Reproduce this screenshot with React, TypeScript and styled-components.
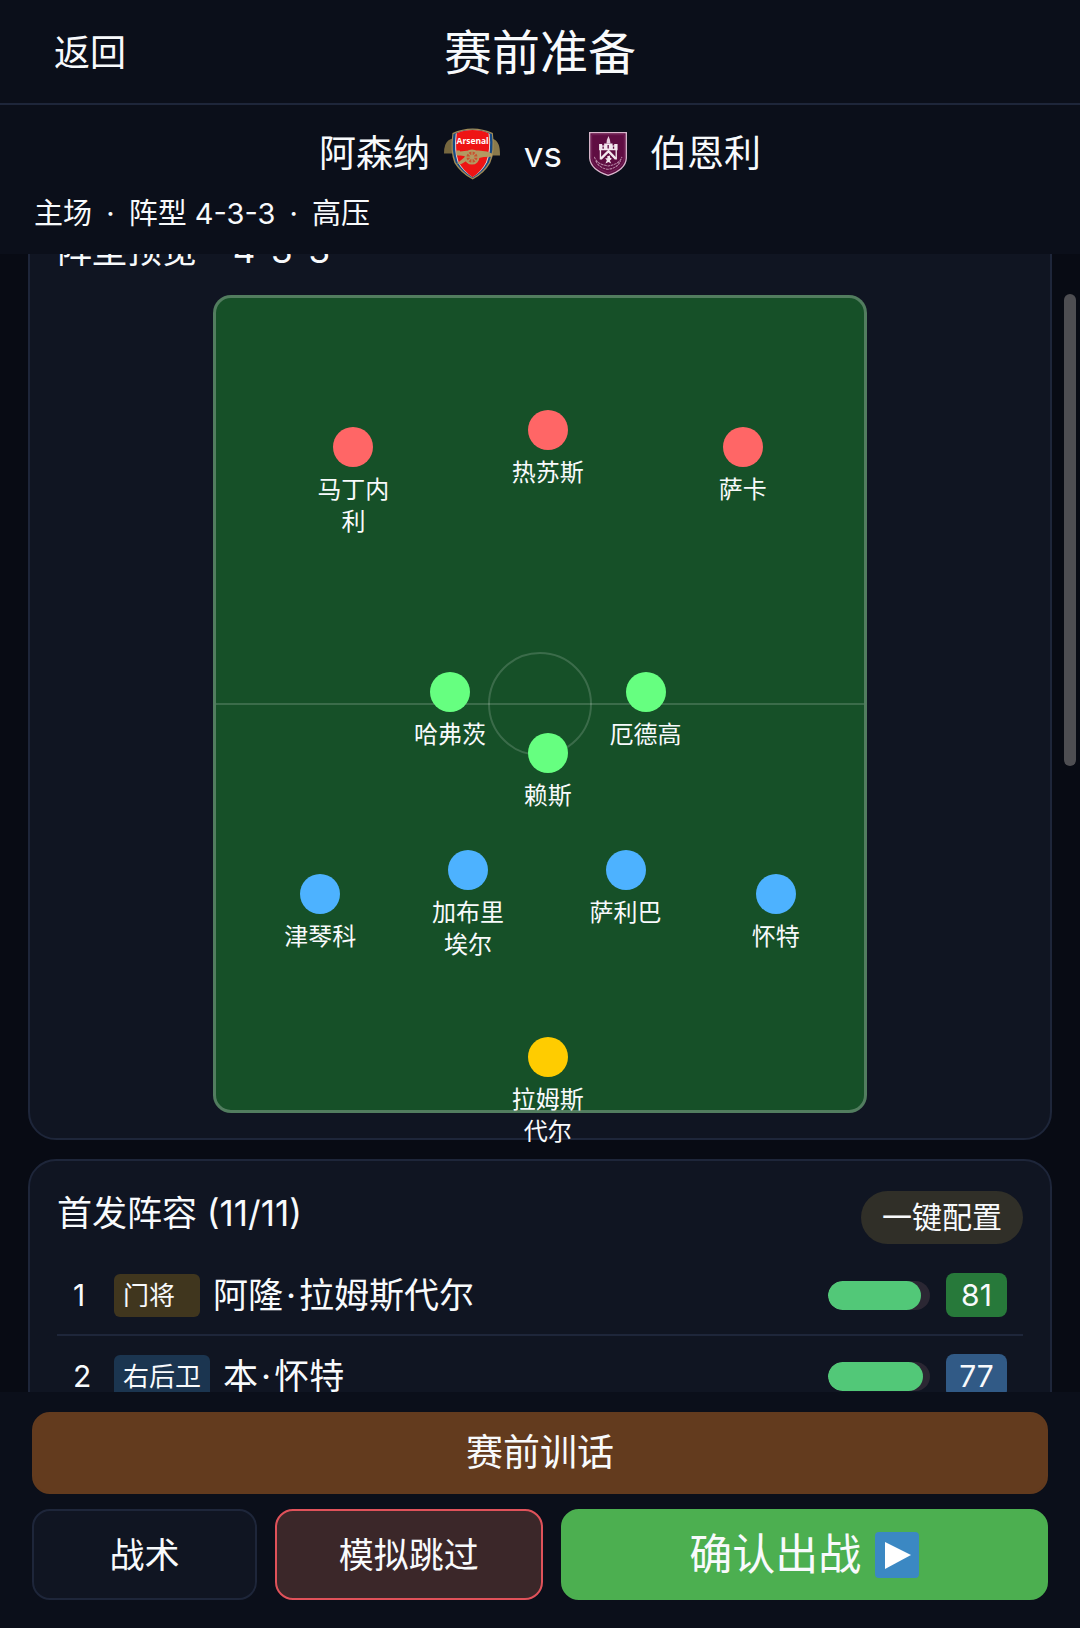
import React from "react"
import styled, { createGlobalStyle } from "styled-components"

const TEXT = "#f8fafc"
const BAR_BG = "#0b0f1a"
const CARD_BG = "#101522"
const LINE = "#1e263a"

const GlobalStyle = createGlobalStyle`
  * {
    box-sizing: border-box;
  }

  body {
    margin: 0;
    background: #080b14;
    color: ${TEXT};
    font-family: Inter, "Noto Sans CJK SC", sans-serif;
    line-height: 1.2;
  }

  button {
    font-family: inherit;
    line-height: inherit;
    color: inherit;
    cursor: pointer;
  }
`

const Page = styled.div`
  display: flex;
  flex-direction: column;
  height: 100vh;
  overflow: hidden;
`

const TopBar = styled.header`
  display: grid;
  grid-template-columns: 1fr auto 1fr;
  align-items: center;
  padding: 17px 54px 14px;
  background: ${BAR_BG};
  border-bottom: 2px solid ${LINE};
`

const BackButton = styled.button`
  justify-self: start;
  padding: 0;
  border: 0;
  background: none;
  font-size: 36px;
  line-height: 72px;
`

const PageTitle = styled.h1`
  margin: 0;
  font-size: 48px;
  font-weight: 400;
  line-height: 72px;
`

const MatchInfo = styled.section`
  padding: 21px 34px 20px;
  background: ${BAR_BG};
`

const Teams = styled.div`
  display: flex;
  align-items: center;
  justify-content: center;
  gap: 18px;
  height: 56px;
  font-size: 37px;
`

const Team = styled.div`
  display: flex;
  align-items: center;
  gap: 14px;
`

const CrestBox = styled.span`
  display: flex;
  justify-content: center;
  width: 56px;
`

const Versus = styled.span`
  width: 44px;
  font-size: 35px;
  text-align: right;
`

const MatchMeta = styled.p`
  margin: 12px 0 0;
  font-size: 29px;
  line-height: 40px;
`

const Separator = styled.span<{ $gap: number }>`
  margin: 0 ${({ $gap }) => $gap}px;
`

const ScrollArea = styled.main`
  position: relative;
  flex: 1;
  min-height: 0;
  overflow: hidden;
  padding: 0 28px;
`

// the list is already scrolled down past the top of the first card
const ScrollContent = styled.div`
  display: flex;
  flex-direction: column;
  gap: 19px;
  margin-top: -58px;
`

const ScrollThumb = styled.div`
  position: absolute;
  top: 40px;
  right: 4px;
  width: 12px;
  height: 41.5%;
  border-radius: 6px;
  background: #4e4e52;
`

const Card = styled.section`
  padding: 30px 27px 25px;
  border: 2px solid ${LINE};
  border-radius: 28px;
  background: ${CARD_BG};
`

const CardHead = styled.div`
  display: flex;
  align-items: flex-start;
  justify-content: space-between;
`

const CardTitle = styled.h2`
  margin: 0;
  font-size: 35px;
  font-weight: 400;
  line-height: 44px;
`

const Pitch = styled.div`
  position: relative;
  width: 654px;
  max-width: 100%;
  aspect-ratio: 4 / 5;
  margin: 23px auto 0;
  border: 3px solid rgba(255, 255, 255, 0.26);
  border-radius: 18px;
  background: #165028;
`

const HalfwayLine = styled.div`
  position: absolute;
  top: 50%;
  left: 0;
  right: 0;
  height: 2px;
  background: rgba(255, 255, 255, 0.16);
  transform: translateY(-50%);
`

const CentreCircle = styled.div`
  position: absolute;
  top: 50%;
  left: 50%;
  width: 104px;
  height: 104px;
  border: 2px solid rgba(255, 255, 255, 0.16);
  border-radius: 50%;
  transform: translate(-50%, -50%);
`

const Marker = styled.div`
  position: absolute;
  display: flex;
  flex-direction: column;
  align-items: center;
  gap: 7px;
  width: 72px;
  margin: -20px 0 0 -36px;
  font-size: 24px;
  line-height: 32px;
  text-align: center;
`

const Dot = styled.span<{ $color: string }>`
  width: 40px;
  height: 40px;
  border-radius: 50%;
  background: ${({ $color }) => $color};
`

const AutoButton = styled.button`
  padding: 0 21px;
  border: 0;
  border-radius: 27px;
  background: #302f28;
  font-size: 30px;
  line-height: 53px;
`

const Roster = styled.ol`
  margin: 11px 0 0;
  padding: 0;
  list-style: none;
`

const RosterRow = styled.li`
  display: flex;
  align-items: center;
  height: 81px;
  padding: 2px 16px 0;
  border-bottom: 2px solid ${LINE};
`

const ShirtNumber = styled.span`
  width: 41px;
  font-size: 30px;
`

const Position = styled.span<{ $bg: string }>`
  min-width: 86px;
  margin-right: 13px;
  padding: 0 9px;
  border-radius: 6px;
  background: ${({ $bg }) => $bg};
  font-size: 26px;
  line-height: 43px;
`

const PlayerName = styled.span`
  flex: 1;
  font-size: 35px;
`

const Stamina = styled.div`
  width: 102px;
  height: 29px;
  margin-right: 16px;
  border-radius: 15px;
  background: #2b2733;
  overflow: hidden;
`

const StaminaFill = styled.div`
  height: 100%;
  border-radius: 15px;
  background: #52c878;
`

const Rating = styled.span<{ $bg: string }>`
  width: 61px;
  border-radius: 8px;
  background: ${({ $bg }) => $bg};
  font-size: 30px;
  line-height: 44px;
  text-align: center;
`

const Footer = styled.footer`
  display: flex;
  flex-direction: column;
  gap: 15px;
  padding: 20px 32px 28px;
  background: ${BAR_BG};
`

const FooterRow = styled.div`
  display: grid;
  grid-template-columns: 225fr 267fr 487fr;
  gap: 18px;
`

const ActionButton = styled.button<{
  $bg: string
  $border?: string
  $size?: number
  $height?: number
}>`
  display: flex;
  align-items: center;
  justify-content: center;
  gap: 14px;
  height: ${({ $height = 91 }) => $height}px;
  padding: 0;
  border: 2px solid ${({ $border, $bg }) => $border || $bg};
  border-radius: 18px;
  background: ${({ $bg }) => $bg};
  font-size: ${({ $size = 35 }) => $size}px;
`

const ArsenalCrest = () => (
  <svg width="57" height="52" viewBox="0 0 172 157" aria-hidden="true">
    <path d="M28 30 Q10 34 4 50 Q0 60 0 77 L28 77Z" fill="#76673f" />
    <path d="M146 30 Q162 34 168 50 Q172 60 172 83 L142 83Z" fill="#8b7a4c" />
    <path
      d="M26 14 Q56 0 88 0 Q120 0 150 14 Q158 70 142 106 Q124 138 88 157 Q52 138 32 106 Q18 70 26 14Z"
      fill="#a28c57"
    />
    <path
      d="M29 17 Q58 4 88 4 Q118 4 147 17 Q154 70 138 104 Q122 134 88 152 Q54 134 36 104 Q22 70 29 17Z"
      fill="#164a86"
    />
    <path
      d="M36 16 Q60 5 88 5 Q116 5 140 16 Q146 70 132 104 Q118 132 88 150 Q58 132 42 104 Q30 70 36 16Z"
      fill="#e9d6d2"
    />
    <path
      d="M39 15 Q62 5 88 5 Q114 5 137 15 Q143 70 129 104 Q116 131 88 150 Q60 131 45 104 Q33 70 39 15Z"
      fill="#ee1414"
    />
    <g fill="#b39a62">
      <path d="M38 68 L48 68 L50 71 Q76 66 106 68 L132 71 L148 78 L148 87 L122 88 L108 91 L50 83 L38 83Z" />
      <path d="M64 88 L40 108 L52 110 L74 97Z" />
    </g>
    <circle cx="86" cy="88" r="20" fill="#c9512f" stroke="#b39a62" strokeWidth="6" />
    <path
      d="M86 69 V107 M67 88 H105 M73 75 L99 101 M99 75 L73 101"
      stroke="#b39a62"
      strokeWidth="4"
    />
    <circle cx="86" cy="88" r="6" fill="#b39a62" />
    <text
      x="88"
      y="49"
      fill="#fff"
      fontSize="26"
      fontWeight="700"
      textAnchor="middle"
      fontFamily="'Open Sans', sans-serif"
    >
      Arsenal
    </text>
  </svg>
)

const BurnleyCrest = () => (
  <svg width="38" height="44" viewBox="0 0 113 131" aria-hidden="true">
    <path
      d="M2 2 H111 V78 Q109 112 57 129 Q5 112 2 78Z"
      fill="#5f0d42"
      stroke="#d9b6cc"
      strokeWidth="4"
    />
    <path
      d="M8 8 H105 V77 Q103 106 57 122 Q11 106 8 77Z"
      fill="none"
      stroke="#7c2c60"
      strokeWidth="2"
    />
    <path d="M52 34 L53 24 L58 12 L62 22 L64 34Z" fill="#e6cedd" />
    <path
      d="M30 36 H39 V40 H45 V34 H70 V40 H75 V36 H85 V54 H30Z"
      fill="#f3e7ee"
    />
    <path d="M42 43 V50 M57 39 V49 M73 43 V50" stroke="#5f0d42" strokeWidth="4" />
    <path d="M34 52 V82 M81 52 V82" stroke="#f3e7ee" strokeWidth="4" />
    <path d="M35 80 L58 57 L80 80" fill="none" stroke="#f3e7ee" strokeWidth="7" />
    <path
      d="M54 72 L62 70 L63 77 L68 80 L62 85 L66 94 L58 89 L49 94 L53 84 L48 78 L55 78Z"
      fill="#f3e7ee"
    />
    <path
      d="M16 74 Q22 96 57 101 Q92 96 98 74 M20 86 Q30 108 57 111 Q84 108 94 86"
      fill="none"
      stroke="#b98aa8"
      strokeWidth="3"
      strokeDasharray="8 2"
    />
  </svg>
)

const PlayIcon = () => (
  <svg width="44" height="46" viewBox="0 0 44 46" aria-hidden="true">
    <rect width="44" height="46" rx="4" fill="#3b88c3" />
    <path d="M10 10 L36 23 L10 37Z" fill="#fff" />
  </svg>
)

const RED = "#ff6666"
const GREEN = "#66ff80"
const BLUE = "#4db2ff"
const YELLOW = "#ffcc00"

interface PitchPlayer {
  name: string
  x: number
  y: number
  color: string
}

// x and y are percentages of the pitch
const LINEUP: PitchPlayer[] = [
  { name: "马丁内利", x: 21.2, y: 18.3, color: RED },
  { name: "热苏斯", x: 51.2, y: 16.3, color: RED },
  { name: "萨卡", x: 81.3, y: 18.3, color: RED },
  { name: "哈弗茨", x: 36.1, y: 48.5, color: GREEN },
  { name: "厄德高", x: 66.3, y: 48.5, color: GREEN },
  { name: "赖斯", x: 51.2, y: 56.1, color: GREEN },
  { name: "津琴科", x: 16.1, y: 73.5, color: BLUE },
  { name: "加布里埃尔", x: 38.9, y: 70.5, color: BLUE },
  { name: "萨利巴", x: 63.2, y: 70.5, color: BLUE },
  { name: "怀特", x: 86.4, y: 73.5, color: BLUE },
  { name: "拉姆斯代尔", x: 51.2, y: 93.5, color: YELLOW },
]

const STARTERS = [
  {
    number: 1,
    position: "门将",
    positionBg: "#40361e",
    name: ["阿隆", "拉姆斯代尔"],
    stamina: 91,
    rating: 81,
    ratingBg: "#27793a",
  },
  {
    number: 2,
    position: "右后卫",
    positionBg: "#1b3550",
    name: ["本", "怀特"],
    stamina: 93,
    rating: 77,
    ratingBg: "#315a86",
  },
]

const App = () => (
  <>
    <GlobalStyle />
    <Page>
      <TopBar>
        <BackButton type="button">返回</BackButton>
        <PageTitle>赛前准备</PageTitle>
      </TopBar>
      <MatchInfo>
        <Teams>
          <Team>
            <span>阿森纳</span>
            <CrestBox>
              <ArsenalCrest />
            </CrestBox>
          </Team>
          <Versus>vs</Versus>
          <Team>
            <CrestBox>
              <BurnleyCrest />
            </CrestBox>
            <span>伯恩利</span>
          </Team>
        </Teams>
        <MatchMeta>
          主场 <Separator $gap={6}>·</Separator> 阵型 4-3-3{" "}
          <Separator $gap={6}>·</Separator> 高压
        </MatchMeta>
      </MatchInfo>
      <ScrollArea>
        <ScrollContent>
          <Card>
            <CardTitle>
              阵型预览 <Separator $gap={3}>·</Separator> 4-3-3
            </CardTitle>
            <Pitch>
              <HalfwayLine />
              <CentreCircle />
              {LINEUP.map(({ name, x, y, color }) => (
                <Marker key={name} style={{ left: `${x}%`, top: `${y}%` }}>
                  <Dot $color={color} />
                  <span>{name}</span>
                </Marker>
              ))}
            </Pitch>
          </Card>
          <Card>
            <CardHead>
              <CardTitle>首发阵容 (11/11)</CardTitle>
              <AutoButton type="button">一键配置</AutoButton>
            </CardHead>
            <Roster>
              {STARTERS.map(player => (
                <RosterRow key={player.number}>
                  <ShirtNumber>{player.number}</ShirtNumber>
                  <Position $bg={player.positionBg}>{player.position}</Position>
                  <PlayerName>
                    {player.name[0]}
                    <Separator $gap={3}>·</Separator>
                    {player.name[1]}
                  </PlayerName>
                  <Stamina>
                    <StaminaFill style={{ width: `${player.stamina}%` }} />
                  </Stamina>
                  <Rating $bg={player.ratingBg}>{player.rating}</Rating>
                </RosterRow>
              ))}
            </Roster>
          </Card>
        </ScrollContent>
        <ScrollThumb />
      </ScrollArea>
      <Footer>
        <ActionButton type="button" $bg="#633b1e" $size={37} $height={82}>
          赛前训话
        </ActionButton>
        <FooterRow>
          <ActionButton type="button" $bg={CARD_BG} $border={LINE}>
            战术
          </ActionButton>
          <ActionButton type="button" $bg="#3b2729" $border="#e0525a">
            模拟跳过
          </ActionButton>
          <ActionButton type="button" $bg="#4caf50" $size={43}>
            确认出战
            <PlayIcon />
          </ActionButton>
        </FooterRow>
      </Footer>
    </Page>
  </>
)

export default App
